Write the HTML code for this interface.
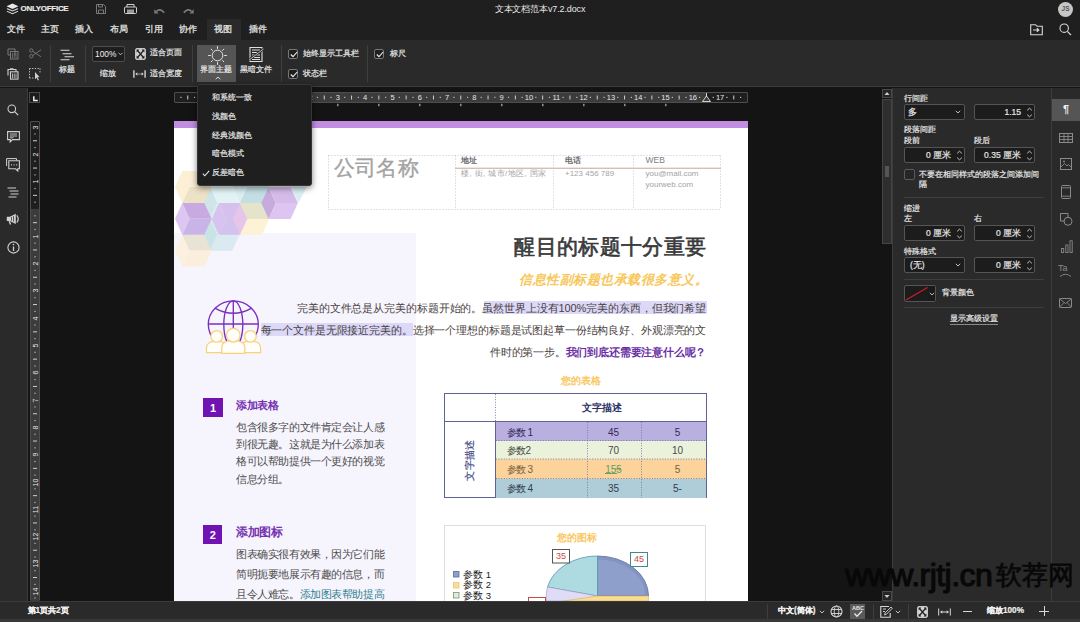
<!DOCTYPE html>
<html><head><meta charset="utf-8">
<style>
*{box-sizing:border-box;margin:0;padding:0}
html,body{width:1080px;height:622px;overflow:hidden;background:#141414;font-family:"Liberation Sans",sans-serif;color:#e8e8e8}
.a{position:absolute}
.t{position:absolute;white-space:nowrap;line-height:1}
svg{position:absolute;overflow:visible}
#top{left:0;top:0;width:1080px;height:40px;background:#1f1f1f}
#tb{left:0;top:40px;width:1080px;height:47px;background:#2a2a2a;border-bottom:1px solid #3b3b3b}
#ls{left:0;top:88px;width:28px;height:514px;background:#2a2a2a;border-right:1px solid #3b3b3b}
#rp{left:892px;top:88px;width:160px;height:514px;background:#2a2a2a;border-left:1px solid #3b3b3b}
#ri{left:1051px;top:88px;width:29px;height:514px;background:#2a2a2a;border-left:1px solid #3b3b3b}
#sb{left:0;top:601px;width:1080px;height:21px;background:#2a2a2a;border-top:1px solid #3b3b3b}
.menu{font-size:9px;color:#e6e6e6;top:25.1px;-webkit-text-stroke-width:0.25px}
.ui{font-size:8px;color:#e6e6e6;-webkit-text-stroke-width:0.2px}
.sep{position:absolute;width:1px;background:#3e3e3e}
.cb{position:absolute;width:10px;height:10px;border:1px solid #777;border-radius:2px;background:#1f1f1f}
.inp{position:absolute;border:1px solid #555;border-radius:2px;background:#1c1c1c}
</style></head><body>
<div id="top" class="a"></div>
<div id="tb" class="a"></div>
<div id="ls" class="a"></div>
<div id="rp" class="a"></div>
<div id="ri" class="a"></div>
<div id="sb" class="a"></div>

<!-- title bar -->
<svg style="left:6px;top:3px" width="13" height="12" viewBox="0 0 13 12">
<path d="M6.5 0.5 L12.5 3.2 L6.5 5.9 L0.5 3.2Z" fill="#e8e8e8"/>
<path d="M1.6 5.3 L6.5 7.5 L11.4 5.3 L12.5 5.9 L6.5 8.6 L0.5 5.9Z" fill="#e8e8e8"/>
<path d="M1.6 8 L6.5 10.2 L11.4 8 L12.5 8.6 L6.5 11.3 L0.5 8.6Z" fill="#e8e8e8"/>
</svg>
<div class="t" style="left:20.5px;top:5.3px;font-size:8px;letter-spacing:-0.29px;font-weight:bold;color:#ececec;-webkit-text-stroke:0.15px #ececec">ONLYOFFICE</div>
<svg style="left:96px;top:4px" width="10" height="10" viewBox="0 0 10 10"><path d="M0.5 0.5H7.5L9.5 2.5V9.5H0.5Z M2.5 0.5V3H6.5V0.5 M2.5 9.5V6H7.5V9.5" fill="none" stroke="#7a7a7a" stroke-width="1"/></svg>
<svg style="left:124px;top:4px" width="13" height="11" viewBox="0 0 13 11"><path d="M3 3V0.5H10V3 M1.5 3H11.5Q12.5 3 12.5 4V8.5Q12.5 9.5 11.5 9.5H1.5Q0.5 9.5 0.5 8.5V4Q0.5 3 1.5 3Z" fill="none" stroke="#d0d0d0" stroke-width="1"/><rect x="3" y="5.5" width="7" height="3.5" fill="#9a9a9a"/></svg>
<svg style="left:154px;top:6.5px" width="11" height="7" viewBox="0 0 11 7"><path d="M2.5 4.3Q6 0.8 10.2 5.8" fill="none" stroke="#7c7c7c" stroke-width="1.7"/><path d="M0.3 2.2V6.6H4.6Z" fill="#7c7c7c"/></svg>
<svg style="left:182.5px;top:6.5px" width="11" height="7" viewBox="0 0 11 7"><path d="M8.5 4.3Q5 0.8 0.8 5.8" fill="none" stroke="#7c7c7c" stroke-width="1.7"/><path d="M10.7 2.2V6.6H6.4Z" fill="#7c7c7c"/></svg>
<div class="t" style="left:0;width:1080px;text-align:center;top:4.8px;font-size:9px;letter-spacing:-0.12px;color:#e8e8e8">文本文档范本v7.2.docx</div>
<div class="a" style="left:1058px;top:2px;width:15px;height:15px;border-radius:50%;background:#c6c6c6"></div>
<div class="t" style="left:1058px;width:15px;text-align:center;top:6px;font-size:6.5px;font-weight:bold;color:#555">JS</div>
<svg style="left:1030px;top:24px" width="14" height="12" viewBox="0 0 14 12"><path d="M0.7 0.7H5.5L7 2.2H12.3V10.8H0.7Z" fill="none" stroke="#d8d8d8" stroke-width="1.1"/><path d="M3 6H8.5 M6.8 4.2L8.8 6L6.8 7.8" fill="none" stroke="#d8d8d8" stroke-width="1.2"/></svg>
<svg style="left:1059px;top:23px" width="13" height="13" viewBox="0 0 13 13"><circle cx="5.2" cy="5.2" r="4.2" fill="none" stroke="#d8d8d8" stroke-width="1.1"/><path d="M8.3 8.3L12 12" stroke="#d8d8d8" stroke-width="1.2"/></svg>
<!-- menu tabs -->
<div class="a" style="left:207px;top:19px;width:34px;height:21px;background:#2a2a2a"></div>
<div class="t menu" style="left:7px">文件</div>
<div class="t menu" style="left:41px">主页</div>
<div class="t menu" style="left:75px">插入</div>
<div class="t menu" style="left:110px">布局</div>
<div class="t menu" style="left:145px">引用</div>
<div class="t menu" style="left:179px">协作</div>
<div class="t menu" style="left:214px">视图</div>
<div class="t menu" style="left:249px">插件</div>

<!-- toolbar -->
<svg style="left:7px;top:48px" width="12" height="12" viewBox="0 0 12 12"><path d="M1 1H8V7.5 M1 1V7H3.5" fill="none" stroke="#7a7a7a" stroke-width="1"/><rect x="3.5" y="3.5" width="7.5" height="7.5" fill="none" stroke="#7a7a7a" stroke-width="1"/><path d="M5.5 5V10 M7.25 5V10 M9 5V10" stroke="#7a7a7a" stroke-width="0.8"/></svg>
<svg style="left:29px;top:48px" width="13" height="11" viewBox="0 0 13 11"><circle cx="2.3" cy="2.5" r="1.7" fill="none" stroke="#7a7a7a" stroke-width="0.9"/><circle cx="2.3" cy="8.2" r="1.7" fill="none" stroke="#7a7a7a" stroke-width="0.9"/><path d="M3.8 3.3L12 8.8 M3.8 7.4L12 1.8" stroke="#7a7a7a" stroke-width="0.9"/></svg>
<svg style="left:7px;top:68px" width="12" height="12" viewBox="0 0 12 12"><path d="M1 7.5V1.5H9V3.5" fill="none" stroke="#d0d0d0" stroke-width="1.1"/><path d="M3 0.8H6.5" stroke="#d0d0d0" stroke-width="1.1"/><rect x="3.5" y="3.8" width="7.5" height="7.3" fill="none" stroke="#d0d0d0" stroke-width="1.1"/><path d="M5.5 5.5V10 M7.25 5.5V10 M9 5.5V10" stroke="#d0d0d0" stroke-width="0.8"/></svg>
<svg style="left:29px;top:68px" width="13" height="13" viewBox="0 0 13 13"><path d="M0.5 0.5H11 M0.5 0.5V10 M0.5 10H6" fill="none" stroke="#d0d0d0" stroke-width="1" stroke-dasharray="1.2 1.5"/><path d="M11 0.5V5" stroke="#d0d0d0" stroke-width="1" stroke-dasharray="1.2 1.5"/><path d="M6 4L10.5 9L8.5 9.2L10 12L9 12.5L7.5 9.8L6 11.2Z" fill="#d0d0d0"/></svg>
<div class="sep" style="left:50px;top:45px;height:37px"></div>
<svg style="left:60px;top:49px" width="16" height="12" viewBox="0 0 16 12"><path d="M0.5 1.3H9.5 M2.5 4.7H11.5 M4.5 7.8H14 M0.5 10.7H9.5" stroke="#d8d8d8" stroke-width="1.1"/></svg>
<div class="t ui" style="left:59px;top:65.5px">标题</div>
<div class="sep" style="left:85px;top:45px;height:37px"></div>
<div class="inp" style="left:92px;top:46px;width:33px;height:16px;background:#1e1e1e;border-color:#4d4d4d"></div>
<div class="t" style="left:95px;top:50px;font-size:8.4px;color:#eee">100%</div>
<svg style="left:118px;top:52px" width="5" height="4" viewBox="0 0 5 4"><path d="M0.5 0.8L2.5 2.8L4.5 0.8" fill="none" stroke="#ccc" stroke-width="0.9"/></svg>
<div class="t ui" style="left:100px;top:70px">缩放</div>
<svg style="left:134.5px;top:48px" width="11" height="12" viewBox="0 0 11 12"><rect x="0.6" y="0.6" width="9.8" height="10.8" rx="1.2" fill="#cfcfcf" stroke="#cfcfcf" stroke-width="1"/><path d="M2.3 2.3L8.7 9.7 M8.7 2.3L2.3 9.7" stroke="#232323" stroke-width="1.3"/><path d="M1.6 1.6H4.4L1.6 4.6Z M9.4 1.6H6.6L9.4 4.6Z M1.6 10.4H4.4L1.6 7.4Z M9.4 10.4H6.6L9.4 7.4Z" fill="#232323"/></svg>
<div class="t ui" style="left:149.5px;top:49px">适合页面</div>
<svg style="left:133px;top:70px" width="13" height="8" viewBox="0 0 13 8"><path d="M0.9 0.2V7.8 M12.1 0.2V7.8" stroke="#c8c8c8" stroke-width="1.5"/><path d="M3 4H10" stroke="#c8c8c8" stroke-width="1" stroke-dasharray="1.5 0.7"/><path d="M2.3 4L4.3 2.3V5.7Z M10.7 4L8.7 2.3V5.7Z" fill="#d0d0d0"/></svg>
<div class="t ui" style="left:149.5px;top:70px">适合宽度</div>
<div class="sep" style="left:192px;top:45px;height:37px"></div>
<div class="a" style="left:197px;top:45px;width:39px;height:37px;background:#555"></div>
<svg style="left:207px;top:45px" width="21" height="21" viewBox="0 0 21 21"><circle cx="10.5" cy="10.5" r="5.3" fill="none" stroke="#e6e6e6" stroke-width="1"/><path d="M10.5 1.2V3.8 M10.5 17.2V19.8 M1.2 10.5H3.8 M17.2 10.5H19.8 M3.9 3.9L5.7 5.7 M15.3 15.3L17.1 17.1 M3.9 17.1L5.7 15.3 M15.3 5.7L17.1 3.9" stroke="#e6e6e6" stroke-width="1"/></svg>
<div class="t ui" style="left:200px;top:65.5px">界面主题</div>
<svg style="left:215px;top:75.5px" width="6" height="4" viewBox="0 0 6 4"><path d="M0.7 3.2L3 1L5.3 3.2" fill="none" stroke="#e6e6e6" stroke-width="0.9"/></svg>
<svg style="left:248px;top:46px" width="17" height="17" viewBox="0 0 17 17"><path d="M2 1.5H14V15.5H2Z" fill="none" stroke="#e0e0e0" stroke-width="1.1"/><path d="M4 4H12 M4 6.5H12 M4 9H12 M4 11.5H12 M4 13.5H12" stroke="#e0e0e0" stroke-width="1"/><path d="M1 14L15.5 3" stroke="#2a2a2a" stroke-width="2.2"/><path d="M1 14L15.5 3" stroke="#e0e0e0" stroke-width="0.8"/></svg>
<div class="t ui" style="left:240px;top:65.5px">黑暗文件</div>
<div class="sep" style="left:281px;top:45px;height:37px"></div>
<div class="cb" style="left:288px;top:49px"></div>
<svg style="left:289.5px;top:51px" width="8" height="7" viewBox="0 0 8 7"><path d="M0.8 3.5L3 5.6L7.2 1" fill="none" stroke="#eee" stroke-width="1.1"/></svg>
<div class="t ui" style="left:303px;top:49.5px">始终显示工具栏</div>
<div class="cb" style="left:288px;top:69px"></div>
<svg style="left:289.5px;top:71px" width="8" height="7" viewBox="0 0 8 7"><path d="M0.8 3.5L3 5.6L7.2 1" fill="none" stroke="#eee" stroke-width="1.1"/></svg>
<div class="t ui" style="left:303px;top:69.5px">状态栏</div>
<div class="sep" style="left:367px;top:45px;height:37px"></div>
<div class="cb" style="left:374px;top:49px"></div>
<svg style="left:375.5px;top:51px" width="8" height="7" viewBox="0 0 8 7"><path d="M0.8 3.5L3 5.6L7.2 1" fill="none" stroke="#eee" stroke-width="1.1"/></svg>
<div class="t ui" style="left:390px;top:49.5px">标尺</div>

<!-- left sidebar -->
<svg style="left:7px;top:104px" width="12" height="12" viewBox="0 0 12 12"><circle cx="4.8" cy="4.8" r="3.8" fill="none" stroke="#d0d0d0" stroke-width="1.1"/><path d="M7.6 7.6L11.2 11.2" stroke="#d0d0d0" stroke-width="1.2"/></svg>
<svg style="left:7px;top:131px" width="13" height="12" viewBox="0 0 13 12"><path d="M0.6 0.6H12.4V8.6H5.5L3.2 11V8.6H0.6Z" fill="none" stroke="#d0d0d0" stroke-width="1.1"/><path d="M2.8 3H10 M2.8 5H10 M2.8 6.8H6.5" stroke="#d0d0d0" stroke-width="0.9"/></svg>
<svg style="left:6px;top:158px" width="14" height="14" viewBox="0 0 14 14"><path d="M0.6 8V0.6H10.5V2.3" fill="none" stroke="#d0d0d0" stroke-width="1"/><path d="M2.8 2.8H13.4V10.8H11.8V13L9.5 10.8H2.8Z" fill="none" stroke="#d0d0d0" stroke-width="1.1"/><path d="M5 6.8H6 M7.6 6.8H8.6 M10.2 6.8H11.2" stroke="#d0d0d0" stroke-width="1.2"/></svg>
<svg style="left:7px;top:187px" width="12" height="11" viewBox="0 0 12 11"><path d="M0.5 1H9 M2.5 4H11.5 M3.5 7H11.5 M1.5 10H9.5" stroke="#d0d0d0" stroke-width="1"/></svg>
<svg style="left:6px;top:213px" width="14" height="12" viewBox="0 0 14 12"><path d="M0.8 3.8H3.8L9.8 0.8V11L3.8 8H0.8Z" fill="#d0d0d0"/><path d="M3.2 8.2L4.6 11.5" stroke="#d0d0d0" stroke-width="1.4"/><path d="M10.8 2.3Q13.6 5.9 10.8 9.5" fill="none" stroke="#d0d0d0" stroke-width="1.2"/><path d="M5.5 4V7.6 M7.5 3V8.6" stroke="#2a2a2a" stroke-width="0.7"/></svg>
<svg style="left:6.5px;top:241px" width="13" height="13" viewBox="0 0 13 13"><circle cx="6.5" cy="6.5" r="5.6" fill="none" stroke="#d0d0d0" stroke-width="1.1"/><path d="M6.5 5.5V10" stroke="#d0d0d0" stroke-width="1.3"/><circle cx="6.5" cy="3.6" r="0.8" fill="#d0d0d0"/></svg>
<!-- rulers -->
<div class="a" style="left:29px;top:92px;width:11px;height:11px;border:1px solid #4a4a4a;background:#1c1c1c"></div>
<svg style="left:32.5px;top:95.5px" width="6" height="6" viewBox="0 0 6 6"><path d="M0.8 0.2V4.6H4.8" fill="none" stroke="#f0f0f0" stroke-width="1.5"/></svg>
<div class="a" style="left:174px;top:92px;width:574px;height:11px;border:1px solid #4e4e4e;border-radius:1px;background:#1e1e1e"></div>
<div class="a" style="left:256px;top:93px;width:451px;height:9px;background:#3c3c3c"></div>
<div class="a" style="left:30px;top:121px;width:10px;height:480px;border:1px solid #4e4e4e;border-radius:1px;background:#1e1e1e"></div>
<div class="a" style="left:31px;top:209px;width:8px;height:392px;background:#3c3c3c"></div>
<svg style="left:0;top:0" width="1080" height="622"><rect x="180.33" y="96.8" width="1.2" height="1.2" fill="#bdbdbd"/><rect x="187.25" y="95.5" width="1" height="4" fill="#cfcfcf"/><rect x="193.97" y="96.8" width="1.2" height="1.2" fill="#bdbdbd"/><rect x="207.62" y="96.8" width="1.2" height="1.2" fill="#bdbdbd"/><rect x="214.55" y="95.5" width="1" height="4" fill="#cfcfcf"/><rect x="221.28" y="96.8" width="1.2" height="1.2" fill="#bdbdbd"/><rect x="234.93" y="96.8" width="1.2" height="1.2" fill="#bdbdbd"/><rect x="241.85" y="95.5" width="1" height="4" fill="#cfcfcf"/><rect x="248.58" y="96.8" width="1.2" height="1.2" fill="#bdbdbd"/><rect x="262.22" y="96.8" width="1.2" height="1.2" fill="#bdbdbd"/><rect x="269.15" y="95.5" width="1" height="4" fill="#cfcfcf"/><rect x="275.88" y="96.8" width="1.2" height="1.2" fill="#bdbdbd"/><rect x="289.52" y="96.8" width="1.2" height="1.2" fill="#bdbdbd"/><rect x="296.45" y="95.5" width="1" height="4" fill="#cfcfcf"/><rect x="303.17" y="96.8" width="1.2" height="1.2" fill="#bdbdbd"/><rect x="316.82" y="96.8" width="1.2" height="1.2" fill="#bdbdbd"/><rect x="323.75" y="95.5" width="1" height="4" fill="#cfcfcf"/><rect x="330.47" y="96.8" width="1.2" height="1.2" fill="#bdbdbd"/><rect x="344.12" y="96.8" width="1.2" height="1.2" fill="#bdbdbd"/><rect x="351.05" y="95.5" width="1" height="4" fill="#cfcfcf"/><rect x="357.77" y="96.8" width="1.2" height="1.2" fill="#bdbdbd"/><rect x="371.42" y="96.8" width="1.2" height="1.2" fill="#bdbdbd"/><rect x="378.35" y="95.5" width="1" height="4" fill="#cfcfcf"/><rect x="385.07" y="96.8" width="1.2" height="1.2" fill="#bdbdbd"/><rect x="398.73" y="96.8" width="1.2" height="1.2" fill="#bdbdbd"/><rect x="405.65" y="95.5" width="1" height="4" fill="#cfcfcf"/><rect x="412.38" y="96.8" width="1.2" height="1.2" fill="#bdbdbd"/><rect x="426.02" y="96.8" width="1.2" height="1.2" fill="#bdbdbd"/><rect x="432.95" y="95.5" width="1" height="4" fill="#cfcfcf"/><rect x="439.67" y="96.8" width="1.2" height="1.2" fill="#bdbdbd"/><rect x="453.32" y="96.8" width="1.2" height="1.2" fill="#bdbdbd"/><rect x="460.25" y="95.5" width="1" height="4" fill="#cfcfcf"/><rect x="466.98" y="96.8" width="1.2" height="1.2" fill="#bdbdbd"/><rect x="480.62" y="96.8" width="1.2" height="1.2" fill="#bdbdbd"/><rect x="487.55" y="95.5" width="1" height="4" fill="#cfcfcf"/><rect x="494.27" y="96.8" width="1.2" height="1.2" fill="#bdbdbd"/><rect x="507.92" y="96.8" width="1.2" height="1.2" fill="#bdbdbd"/><rect x="514.85" y="95.5" width="1" height="4" fill="#cfcfcf"/><rect x="521.57" y="96.8" width="1.2" height="1.2" fill="#bdbdbd"/><rect x="535.23" y="96.8" width="1.2" height="1.2" fill="#bdbdbd"/><rect x="542.15" y="95.5" width="1" height="4" fill="#cfcfcf"/><rect x="548.88" y="96.8" width="1.2" height="1.2" fill="#bdbdbd"/><rect x="562.52" y="96.8" width="1.2" height="1.2" fill="#bdbdbd"/><rect x="569.45" y="95.5" width="1" height="4" fill="#cfcfcf"/><rect x="576.18" y="96.8" width="1.2" height="1.2" fill="#bdbdbd"/><rect x="589.82" y="96.8" width="1.2" height="1.2" fill="#bdbdbd"/><rect x="596.75" y="95.5" width="1" height="4" fill="#cfcfcf"/><rect x="603.48" y="96.8" width="1.2" height="1.2" fill="#bdbdbd"/><rect x="617.12" y="96.8" width="1.2" height="1.2" fill="#bdbdbd"/><rect x="624.05" y="95.5" width="1" height="4" fill="#cfcfcf"/><rect x="630.77" y="96.8" width="1.2" height="1.2" fill="#bdbdbd"/><rect x="644.43" y="96.8" width="1.2" height="1.2" fill="#bdbdbd"/><rect x="651.35" y="95.5" width="1" height="4" fill="#cfcfcf"/><rect x="658.07" y="96.8" width="1.2" height="1.2" fill="#bdbdbd"/><rect x="671.73" y="96.8" width="1.2" height="1.2" fill="#bdbdbd"/><rect x="678.65" y="95.5" width="1" height="4" fill="#cfcfcf"/><rect x="685.38" y="96.8" width="1.2" height="1.2" fill="#bdbdbd"/><rect x="699.02" y="96.8" width="1.2" height="1.2" fill="#bdbdbd"/><rect x="705.95" y="95.5" width="1" height="4" fill="#cfcfcf"/><rect x="712.68" y="96.8" width="1.2" height="1.2" fill="#bdbdbd"/><rect x="726.32" y="96.8" width="1.2" height="1.2" fill="#bdbdbd"/><rect x="733.25" y="95.5" width="1" height="4" fill="#cfcfcf"/><rect x="739.98" y="96.8" width="1.2" height="1.2" fill="#bdbdbd"/></svg>
<div class="t" style="left:195.40px;width:12px;text-align:center;top:93.5px;font-size:7.5px;color:#e6e6e6">2</div>
<div class="t" style="left:222.70px;width:12px;text-align:center;top:93.5px;font-size:7.5px;color:#e6e6e6">1</div>
<div class="t" style="left:277.30px;width:12px;text-align:center;top:93.5px;font-size:7.5px;color:#e6e6e6">1</div>
<div class="t" style="left:304.60px;width:12px;text-align:center;top:93.5px;font-size:7.5px;color:#e6e6e6">2</div>
<div class="t" style="left:331.90px;width:12px;text-align:center;top:93.5px;font-size:7.5px;color:#e6e6e6">3</div>
<div class="t" style="left:359.20px;width:12px;text-align:center;top:93.5px;font-size:7.5px;color:#e6e6e6">4</div>
<div class="t" style="left:386.50px;width:12px;text-align:center;top:93.5px;font-size:7.5px;color:#e6e6e6">5</div>
<div class="t" style="left:413.80px;width:12px;text-align:center;top:93.5px;font-size:7.5px;color:#e6e6e6">6</div>
<div class="t" style="left:441.10px;width:12px;text-align:center;top:93.5px;font-size:7.5px;color:#e6e6e6">7</div>
<div class="t" style="left:468.40px;width:12px;text-align:center;top:93.5px;font-size:7.5px;color:#e6e6e6">8</div>
<div class="t" style="left:495.70px;width:12px;text-align:center;top:93.5px;font-size:7.5px;color:#e6e6e6">9</div>
<div class="t" style="left:523.00px;width:12px;text-align:center;top:93.5px;font-size:7.5px;color:#e6e6e6">10</div>
<div class="t" style="left:550.30px;width:12px;text-align:center;top:93.5px;font-size:7.5px;color:#e6e6e6">11</div>
<div class="t" style="left:577.60px;width:12px;text-align:center;top:93.5px;font-size:7.5px;color:#e6e6e6">12</div>
<div class="t" style="left:604.90px;width:12px;text-align:center;top:93.5px;font-size:7.5px;color:#e6e6e6">13</div>
<div class="t" style="left:632.20px;width:12px;text-align:center;top:93.5px;font-size:7.5px;color:#e6e6e6">14</div>
<div class="t" style="left:659.50px;width:12px;text-align:center;top:93.5px;font-size:7.5px;color:#e6e6e6">15</div>
<div class="t" style="left:686.80px;width:12px;text-align:center;top:93.5px;font-size:7.5px;color:#e6e6e6">16</div>
<div class="t" style="left:714.10px;width:12px;text-align:center;top:93.5px;font-size:7.5px;color:#e6e6e6">17</div>
<svg style="left:0;top:0" width="1080" height="622"><path d="M706.5 93V97 M702.5 101.5L706.5 96L710.5 101.5Z" fill="#3c3c3c" stroke="#e0e0e0" stroke-width="0.9"/><rect x="337.3" y="103.8" width="1.1" height="2.4" fill="#c0c0c0"/><rect x="378.3" y="103.8" width="1.1" height="2.4" fill="#c0c0c0"/><rect x="419.3" y="103.8" width="1.1" height="2.4" fill="#c0c0c0"/><rect x="460.3" y="103.8" width="1.1" height="2.4" fill="#c0c0c0"/><rect x="501.3" y="103.8" width="1.1" height="2.4" fill="#c0c0c0"/><rect x="542.3" y="103.8" width="1.1" height="2.4" fill="#c0c0c0"/><rect x="583.3" y="103.8" width="1.1" height="2.4" fill="#c0c0c0"/><rect x="624.3" y="103.8" width="1.1" height="2.4" fill="#c0c0c0"/><rect x="665.3" y="103.8" width="1.1" height="2.4" fill="#c0c0c0"/></svg>
<svg style="left:0;top:0" width="1080" height="622"><rect x="34.4" y="133.33" width="1.2" height="1.2" fill="#bdbdbd"/><rect x="33" y="140.25" width="4" height="1" fill="#cfcfcf"/><rect x="34.4" y="146.97" width="1.2" height="1.2" fill="#bdbdbd"/><rect x="34.4" y="160.62" width="1.2" height="1.2" fill="#bdbdbd"/><rect x="33" y="167.55" width="4" height="1" fill="#cfcfcf"/><rect x="34.4" y="174.28" width="1.2" height="1.2" fill="#bdbdbd"/><rect x="34.4" y="187.93" width="1.2" height="1.2" fill="#bdbdbd"/><rect x="33" y="194.85" width="4" height="1" fill="#cfcfcf"/><rect x="34.4" y="201.58" width="1.2" height="1.2" fill="#bdbdbd"/><rect x="34.4" y="215.22" width="1.2" height="1.2" fill="#bdbdbd"/><rect x="33" y="222.15" width="4" height="1" fill="#cfcfcf"/><rect x="34.4" y="228.88" width="1.2" height="1.2" fill="#bdbdbd"/><rect x="34.4" y="242.53" width="1.2" height="1.2" fill="#bdbdbd"/><rect x="33" y="249.45" width="4" height="1" fill="#cfcfcf"/><rect x="34.4" y="256.17" width="1.2" height="1.2" fill="#bdbdbd"/><rect x="34.4" y="269.82" width="1.2" height="1.2" fill="#bdbdbd"/><rect x="33" y="276.75" width="4" height="1" fill="#cfcfcf"/><rect x="34.4" y="283.47" width="1.2" height="1.2" fill="#bdbdbd"/><rect x="34.4" y="297.12" width="1.2" height="1.2" fill="#bdbdbd"/><rect x="33" y="304.05" width="4" height="1" fill="#cfcfcf"/><rect x="34.4" y="310.77" width="1.2" height="1.2" fill="#bdbdbd"/><rect x="34.4" y="324.42" width="1.2" height="1.2" fill="#bdbdbd"/><rect x="33" y="331.35" width="4" height="1" fill="#cfcfcf"/><rect x="34.4" y="338.07" width="1.2" height="1.2" fill="#bdbdbd"/><rect x="34.4" y="351.73" width="1.2" height="1.2" fill="#bdbdbd"/><rect x="33" y="358.65" width="4" height="1" fill="#cfcfcf"/><rect x="34.4" y="365.38" width="1.2" height="1.2" fill="#bdbdbd"/><rect x="34.4" y="379.02" width="1.2" height="1.2" fill="#bdbdbd"/><rect x="33" y="385.95" width="4" height="1" fill="#cfcfcf"/><rect x="34.4" y="392.67" width="1.2" height="1.2" fill="#bdbdbd"/><rect x="34.4" y="406.32" width="1.2" height="1.2" fill="#bdbdbd"/><rect x="33" y="413.25" width="4" height="1" fill="#cfcfcf"/><rect x="34.4" y="419.98" width="1.2" height="1.2" fill="#bdbdbd"/><rect x="34.4" y="433.62" width="1.2" height="1.2" fill="#bdbdbd"/><rect x="33" y="440.55" width="4" height="1" fill="#cfcfcf"/><rect x="34.4" y="447.27" width="1.2" height="1.2" fill="#bdbdbd"/><rect x="34.4" y="460.92" width="1.2" height="1.2" fill="#bdbdbd"/><rect x="33" y="467.85" width="4" height="1" fill="#cfcfcf"/><rect x="34.4" y="474.57" width="1.2" height="1.2" fill="#bdbdbd"/><rect x="34.4" y="488.22" width="1.2" height="1.2" fill="#bdbdbd"/><rect x="33" y="495.15" width="4" height="1" fill="#cfcfcf"/><rect x="34.4" y="501.88" width="1.2" height="1.2" fill="#bdbdbd"/><rect x="34.4" y="515.52" width="1.2" height="1.2" fill="#bdbdbd"/><rect x="33" y="522.45" width="4" height="1" fill="#cfcfcf"/><rect x="34.4" y="529.18" width="1.2" height="1.2" fill="#bdbdbd"/><rect x="34.4" y="542.82" width="1.2" height="1.2" fill="#bdbdbd"/><rect x="33" y="549.75" width="4" height="1" fill="#cfcfcf"/><rect x="34.4" y="556.48" width="1.2" height="1.2" fill="#bdbdbd"/><rect x="34.4" y="570.12" width="1.2" height="1.2" fill="#bdbdbd"/><rect x="33" y="577.05" width="4" height="1" fill="#cfcfcf"/><rect x="34.4" y="583.77" width="1.2" height="1.2" fill="#bdbdbd"/><rect x="34.4" y="597.43" width="1.2" height="1.2" fill="#bdbdbd"/></svg>
<div class="t" style="left:29px;width:12px;text-align:center;top:123.60px;font-size:7px;color:#e6e6e6;transform:rotate(-90deg)">3</div>
<div class="t" style="left:29px;width:12px;text-align:center;top:150.90px;font-size:7px;color:#e6e6e6;transform:rotate(-90deg)">2</div>
<div class="t" style="left:29px;width:12px;text-align:center;top:178.20px;font-size:7px;color:#e6e6e6;transform:rotate(-90deg)">1</div>
<div class="t" style="left:29px;width:12px;text-align:center;top:232.80px;font-size:7px;color:#e6e6e6;transform:rotate(-90deg)">1</div>
<div class="t" style="left:29px;width:12px;text-align:center;top:260.10px;font-size:7px;color:#e6e6e6;transform:rotate(-90deg)">2</div>
<div class="t" style="left:29px;width:12px;text-align:center;top:287.40px;font-size:7px;color:#e6e6e6;transform:rotate(-90deg)">3</div>
<div class="t" style="left:29px;width:12px;text-align:center;top:314.70px;font-size:7px;color:#e6e6e6;transform:rotate(-90deg)">4</div>
<div class="t" style="left:29px;width:12px;text-align:center;top:342.00px;font-size:7px;color:#e6e6e6;transform:rotate(-90deg)">5</div>
<div class="t" style="left:29px;width:12px;text-align:center;top:369.30px;font-size:7px;color:#e6e6e6;transform:rotate(-90deg)">6</div>
<div class="t" style="left:29px;width:12px;text-align:center;top:396.60px;font-size:7px;color:#e6e6e6;transform:rotate(-90deg)">7</div>
<div class="t" style="left:29px;width:12px;text-align:center;top:423.90px;font-size:7px;color:#e6e6e6;transform:rotate(-90deg)">8</div>
<div class="t" style="left:29px;width:12px;text-align:center;top:451.20px;font-size:7px;color:#e6e6e6;transform:rotate(-90deg)">9</div>
<div class="t" style="left:29px;width:12px;text-align:center;top:478.50px;font-size:7px;color:#e6e6e6;transform:rotate(-90deg)">10</div>
<div class="t" style="left:29px;width:12px;text-align:center;top:505.80px;font-size:7px;color:#e6e6e6;transform:rotate(-90deg)">11</div>
<div class="t" style="left:29px;width:12px;text-align:center;top:533.10px;font-size:7px;color:#e6e6e6;transform:rotate(-90deg)">12</div>
<div class="t" style="left:29px;width:12px;text-align:center;top:560.40px;font-size:7px;color:#e6e6e6;transform:rotate(-90deg)">13</div>
<div class="t" style="left:29px;width:12px;text-align:center;top:587.70px;font-size:7px;color:#e6e6e6;transform:rotate(-90deg)">14</div>
<!-- scrollbar -->
<div class="a" style="left:882px;top:89px;width:10px;height:9px;border:1px solid #4a4a4a;background:#262626"></div>
<svg style="left:884px;top:91px" width="6" height="5" viewBox="0 0 6 5"><path d="M0.5 4L3 1L5.5 4Z" fill="#cfcfcf"/></svg>
<div class="a" style="left:882px;top:99px;width:10px;height:145px;border:1px solid #454545;background:#2e2e2e"></div>
<div class="a" style="left:885px;top:166px;width:4px;height:11px;background:#555"></div>
<div class="a" style="left:882px;top:591px;width:10px;height:10px;border:1px solid #4a4a4a;background:#262626"></div>
<svg style="left:884px;top:593.5px" width="6" height="5" viewBox="0 0 6 5"><path d="M0.5 1L3 4L5.5 1Z" fill="#cfcfcf"/></svg>

<!-- right panel -->
<div class="t ui" style="left:904px;top:94.5px">行间距</div>
<div class="inp" style="left:904px;top:104px;width:61px;height:16px"></div><div class="t ui" style="left:908px;top:107.7px;font-size:8.5px">多</div><svg style="left:955px;top:110.0px" width="6" height="4" viewBox="0 0 6 4"><path d="M0.8 0.8L3 3L5.2 0.8" fill="none" stroke="#d0d0d0" stroke-width="0.9"/></svg>
<div class="inp" style="left:974px;top:104px;width:61px;height:16px"></div><div class="t ui" style="left:974px;width:47px;text-align:right;top:107.7px;font-size:8.5px">1.15</div><svg style="left:1026px;top:107.0px" width="7" height="11" viewBox="0 0 7 11"><path d="M1.2 3.3L3.5 1.2L5.8 3.3 M1.2 7.7L3.5 9.8L5.8 7.7" fill="none" stroke="#d8d8d8" stroke-width="0.9"/></svg>
<div class="t ui" style="left:904px;top:126px">段落间距</div>
<div class="t ui" style="left:904px;top:137px">段前</div>
<div class="t ui" style="left:974px;top:137px">段后</div>
<div class="inp" style="left:904px;top:147px;width:61px;height:16px"></div><div class="t ui" style="left:904px;width:47px;text-align:right;top:150.7px;font-size:8.5px">0 厘米</div><svg style="left:956px;top:150.0px" width="7" height="11" viewBox="0 0 7 11"><path d="M1.2 3.3L3.5 1.2L5.8 3.3 M1.2 7.7L3.5 9.8L5.8 7.7" fill="none" stroke="#d8d8d8" stroke-width="0.9"/></svg>
<div class="inp" style="left:974px;top:147px;width:61px;height:16px"></div><div class="t ui" style="left:974px;width:47px;text-align:right;top:150.7px;font-size:8.5px">0.35 厘米</div><svg style="left:1026px;top:150.0px" width="7" height="11" viewBox="0 0 7 11"><path d="M1.2 3.3L3.5 1.2L5.8 3.3 M1.2 7.7L3.5 9.8L5.8 7.7" fill="none" stroke="#d8d8d8" stroke-width="0.9"/></svg>
<div class="cb" style="left:904px;top:169px;width:10.5px;height:10.5px;border-color:#5a5a5a;background:#262626"></div>
<div class="t ui" style="left:919px;top:170px;font-size:8px;line-height:9.5px;white-space:normal;width:125px">不要在相同样式的段落之间添加间隔</div>
<div class="a" style="left:904px;top:197px;width:140px;height:1px;background:#3e3e3e"></div>
<div class="t ui" style="left:904px;top:204.5px">缩进</div>
<div class="t ui" style="left:904px;top:215px">左</div>
<div class="t ui" style="left:974px;top:215px">右</div>
<div class="inp" style="left:904px;top:225px;width:61px;height:16px"></div><div class="t ui" style="left:904px;width:47px;text-align:right;top:228.7px;font-size:8.5px">0 厘米</div><svg style="left:956px;top:228.0px" width="7" height="11" viewBox="0 0 7 11"><path d="M1.2 3.3L3.5 1.2L5.8 3.3 M1.2 7.7L3.5 9.8L5.8 7.7" fill="none" stroke="#d8d8d8" stroke-width="0.9"/></svg>
<div class="inp" style="left:974px;top:225px;width:61px;height:16px"></div><div class="t ui" style="left:974px;width:47px;text-align:right;top:228.7px;font-size:8.5px">0 厘米</div><svg style="left:1026px;top:228.0px" width="7" height="11" viewBox="0 0 7 11"><path d="M1.2 3.3L3.5 1.2L5.8 3.3 M1.2 7.7L3.5 9.8L5.8 7.7" fill="none" stroke="#d8d8d8" stroke-width="0.9"/></svg>
<div class="t ui" style="left:904px;top:247.5px">特殊格式</div>
<div class="inp" style="left:904px;top:257px;width:61px;height:16px"></div><div class="t ui" style="left:910px;top:260.7px;font-size:8.5px">(无)</div><svg style="left:955px;top:263.0px" width="6" height="4" viewBox="0 0 6 4"><path d="M0.8 0.8L3 3L5.2 0.8" fill="none" stroke="#d0d0d0" stroke-width="0.9"/></svg>
<div class="inp" style="left:974px;top:257px;width:61px;height:16px"></div><div class="t ui" style="left:974px;width:47px;text-align:right;top:260.7px;font-size:8.5px">0 厘米</div><svg style="left:1026px;top:260.0px" width="7" height="11" viewBox="0 0 7 11"><path d="M1.2 3.3L3.5 1.2L5.8 3.3 M1.2 7.7L3.5 9.8L5.8 7.7" fill="none" stroke="#d8d8d8" stroke-width="0.9"/></svg>
<div class="a" style="left:904px;top:279px;width:140px;height:1px;background:#3e3e3e"></div>
<div class="inp" style="left:904px;top:285px;width:32px;height:17px;border-color:#555"></div>
<div class="a" style="left:928px;top:286px;width:7px;height:15px;background:#1a1a1a"></div>
<svg style="left:905px;top:286px" width="23" height="15" viewBox="0 0 23 15"><path d="M1 14L22.5 1.5" stroke="#d21f2a" stroke-width="1.1"/></svg>
<svg style="left:929px;top:292px" width="6" height="4" viewBox="0 0 6 4"><path d="M0.8 0.8L3 3L5.2 0.8" fill="none" stroke="#d0d0d0" stroke-width="0.9"/></svg>
<div class="t ui" style="left:942px;top:289px">背景颜色</div>
<div class="a" style="left:904px;top:307px;width:140px;height:1px;background:#3e3e3e"></div>
<div class="t ui" style="left:950px;top:315px">显示高级设置</div>
<div class="a" style="left:950px;top:323.5px;width:48px;height:1px;background:#8a8a8a"></div>
<div class="a" style="left:1052px;top:99px;width:28px;height:22px;background:#555"></div>
<div class="t" style="left:1052px;width:28px;text-align:center;top:104px;font-size:11px;font-weight:bold;color:#f0f0f0">¶</div>
<svg style="left:1059px;top:133px" width="14" height="10" viewBox="0 0 14 10"><rect x="0.5" y="0.5" width="13" height="9" fill="none" stroke="#8a8a8a" stroke-width="1"/><path d="M0.5 3.5H13.5 M0.5 6.5H13.5 M5 0.5V9.5 M9 0.5V9.5" stroke="#8a8a8a" stroke-width="0.9"/></svg>
<svg style="left:1060px;top:158px" width="12" height="12" viewBox="0 0 12 12"><rect x="0.5" y="0.5" width="11" height="11" fill="none" stroke="#8a8a8a" stroke-width="1"/><path d="M1 9L4.5 5.5L7 8L8.5 6.5L11 9" fill="none" stroke="#8a8a8a" stroke-width="0.9"/><circle cx="4" cy="3.5" r="0.9" fill="#8a8a8a"/></svg>
<svg style="left:1061px;top:185px" width="10" height="14" viewBox="0 0 10 14"><rect x="0.5" y="0.5" width="9" height="13" rx="1" fill="none" stroke="#8a8a8a" stroke-width="1"/><path d="M0.5 2.8H9.5 M0.5 11.2H9.5" stroke="#8a8a8a" stroke-width="0.9"/></svg>
<svg style="left:1060px;top:213px" width="13" height="13" viewBox="0 0 13 13"><path d="M0.5 0.5H8V5 M0.5 0.5V8H4.5" fill="none" stroke="#8a8a8a" stroke-width="1"/><circle cx="8" cy="8.3" r="4" fill="none" stroke="#8a8a8a" stroke-width="1"/></svg>
<svg style="left:1061px;top:240px" width="12" height="13" viewBox="0 0 12 13"><rect x="0.5" y="8.5" width="2.2" height="4" fill="none" stroke="#8a8a8a" stroke-width="0.9"/><rect x="4.8" y="5" width="2.2" height="7.5" fill="none" stroke="#8a8a8a" stroke-width="0.9"/><rect x="9" y="0.8" width="2.2" height="11.7" fill="none" stroke="#8a8a8a" stroke-width="0.9"/></svg>
<div class="t" style="left:1058px;top:264px;font-size:9px;color:#8a8a8a">Ta</div>
<svg style="left:1059px;top:273px" width="13" height="4" viewBox="0 0 13 4"><path d="M1 3.5Q6.5 -1 12 3.5" fill="none" stroke="#8a8a8a" stroke-width="0.9"/></svg>
<svg style="left:1059px;top:298px" width="13" height="10" viewBox="0 0 13 10"><rect x="0.5" y="0.5" width="12" height="9" rx="0.8" fill="none" stroke="#8a8a8a" stroke-width="1"/><path d="M0.5 0.8L6.5 5.5L12.5 0.8 M0.8 9L5 4.5 M12.2 9L8 4.5" fill="none" stroke="#8a8a8a" stroke-width="0.9"/></svg>
<!-- status bar -->
<div class="a" style="left:0;top:619px;width:1080px;height:3px;background:#383838"></div>
<div class="t ui" style="left:27.5px;top:607px;font-weight:bold;font-size:8.2px;color:#f0f0f0">第1页共2页</div>
<div class="sep" style="left:767px;top:604px;height:15px"></div>
<div class="t ui" style="left:778px;top:607px;font-weight:bold;font-size:8.2px;color:#f0f0f0">中文(简体)</div>
<svg style="left:819px;top:609.5px" width="6" height="4" viewBox="0 0 6 4"><path d="M0.8 0.8L3 3L5.2 0.8" fill="none" stroke="#d0d0d0" stroke-width="0.9"/></svg>
<svg style="left:830px;top:605px" width="13" height="13" viewBox="0 0 13 13"><circle cx="6.5" cy="6.5" r="5.5" fill="none" stroke="#d8d8d8" stroke-width="1.1"/><ellipse cx="6.5" cy="6.5" rx="2.3" ry="5.5" fill="none" stroke="#d8d8d8" stroke-width="0.9"/><path d="M1 4.5H12 M1 8.5H12" stroke="#d8d8d8" stroke-width="0.9"/></svg>
<div class="a" style="left:850px;top:604px;width:15px;height:15px;background:#5a5a5a"></div>
<div class="t" style="left:852px;top:606px;font-size:5.5px;font-weight:bold;color:#e8e8e8">ABC</div>
<svg style="left:853px;top:610px" width="10" height="8" viewBox="0 0 10 8"><path d="M1.5 3.5L4 6.3L9 1" fill="none" stroke="#e8e8e8" stroke-width="1.3"/></svg>
<div class="sep" style="left:873px;top:604px;height:15px"></div>
<svg style="left:880px;top:605px" width="13" height="13" viewBox="0 0 13 13"><path d="M9 1.5H0.8V12.2H10.2V8" fill="none" stroke="#d8d8d8" stroke-width="1.1"/><path d="M3 4H6 M3 6.5H5" stroke="#d8d8d8" stroke-width="0.9"/><path d="M4.5 10L5.2 7.8L11 2L12.3 3.3L6.5 9.2Z" fill="none" stroke="#d8d8d8" stroke-width="0.9"/></svg>
<svg style="left:895px;top:609.5px" width="6" height="4" viewBox="0 0 6 4"><path d="M0.8 0.8L3 3L5.2 0.8" fill="none" stroke="#d0d0d0" stroke-width="0.9"/></svg>
<div class="sep" style="left:908px;top:604px;height:15px"></div>
<svg style="left:917px;top:605.5px" width="11" height="12" viewBox="0 0 11 12"><rect x="0.6" y="0.6" width="9.8" height="10.8" rx="1.2" fill="#d4d4d4" stroke="#d4d4d4" stroke-width="1"/><path d="M2.3 2.3L8.7 9.7 M8.7 2.3L2.3 9.7" stroke="#232323" stroke-width="1.3"/><path d="M1.6 1.6H4.4L1.6 4.6Z M9.4 1.6H6.6L9.4 4.6Z M1.6 10.4H4.4L1.6 7.4Z M9.4 10.4H6.6L9.4 7.4Z" fill="#232323"/></svg>
<svg style="left:938px;top:608px" width="13" height="8" viewBox="0 0 13 8"><path d="M0.7 0.5V7.5 M12.3 0.5V7.5 M2.5 4H10.5" stroke="#d8d8d8" stroke-width="1"/><path d="M2.3 4L4.3 2.3V5.7Z M10.7 4L8.7 2.3V5.7Z" fill="#d8d8d8"/></svg>
<div class="a" style="left:963px;top:611px;width:9px;height:1px;background:#d8d8d8"></div>
<div class="t ui" style="left:987px;top:607px;font-weight:bold;font-size:8.2px;color:#f0f0f0">缩放100%</div>
<div class="a" style="left:1039px;top:611px;width:10px;height:1px;background:#d8d8d8"></div>
<div class="a" style="left:1043.5px;top:606px;width:1px;height:10px;background:#d8d8d8"></div>

<!-- canvas -->
<div id="page" class="a" style="left:174px;top:121px;width:574px;height:480px;background:#fff;overflow:hidden;color:#333">
<div class="a" style="left:0;top:0;width:574px;height:6.5px;background:#c08de0"></div>
<div class="a" style="left:0;top:112px;width:242px;height:400px;background:#f6f4fd"></div>
<svg style="left:0;top:0" width="574" height="480"><polygon points="116.70,66.00 133.00,66.00 124.40,81.80" fill="#d9eef2"/><polygon points="58.50,66.00 65.80,50.10 73.10,66.00 65.80,81.90" fill="#dbeef2"/><polygon points="65.80,50.10 87.80,50.10 95.10,66.00 73.10,66.00" fill="#dff0f4"/><polygon points="73.10,66.00 95.10,66.00 87.80,81.90 65.80,81.90" fill="#c3dfe4"/><polygon points="28.90,81.80 36.20,65.90 43.50,81.80 36.20,97.70" fill="#cfe5e9"/><polygon points="36.20,65.90 58.20,65.90 65.50,81.80 43.50,81.80" fill="#e2f2f5"/><polygon points="43.50,81.80 65.50,81.80 58.20,97.70 36.20,97.70" fill="#d8ecf0"/><polygon points="1.00,66.00 8.30,50.10 15.60,66.00 8.30,81.90" fill="#fcefd6"/><polygon points="8.30,50.10 30.30,50.10 37.60,66.00 15.60,66.00" fill="#fcefd6"/><polygon points="15.60,66.00 37.60,66.00 30.30,81.90 8.30,81.90" fill="#ece2c6"/><polygon points="28.90,113.80 36.20,97.90 43.50,113.80 36.20,129.70" fill="#c9e3e7"/><polygon points="36.20,97.90 58.20,97.90 65.50,113.80 43.50,113.80" fill="#d0e6ea"/><polygon points="43.50,113.80 65.50,113.80 58.20,129.70 36.20,129.70" fill="#dbe9f1"/><polygon points="1.00,129.60 8.30,113.70 15.60,129.60 8.30,145.50" fill="#fcf0e0"/><polygon points="8.30,113.70 30.30,113.70 37.60,129.60 15.60,129.60" fill="#e8e3d4"/><polygon points="15.60,129.60 37.60,129.60 30.30,145.50 8.30,145.50" fill="#fbeedc"/><polygon points="1.00,97.80 8.30,81.90 15.60,97.80 8.30,113.70" fill="#dec6f2"/><polygon points="8.30,81.90 30.30,81.90 37.60,97.80 15.60,97.80" fill="#c9a9e1"/><polygon points="15.60,97.80 37.60,97.80 30.30,113.70 8.30,113.70" fill="#c8b4e7"/><polygon points="37.80,97.90 45.10,82.00 52.40,97.90 45.10,113.80" fill="#d8c2ef"/><polygon points="45.10,82.00 67.10,82.00 74.40,97.90 52.40,97.90" fill="#d6c0ee"/><polygon points="52.40,97.90 74.40,97.90 67.10,113.80 45.10,113.80" fill="#d3c1ee"/><polygon points="58.60,97.90 65.90,82.00 73.20,97.90 65.90,113.80" fill="#e6c6e8"/><polygon points="65.90,82.00 87.90,82.00 95.20,97.90 73.20,97.90" fill="#e5e3ca"/><polygon points="73.20,97.90 95.20,97.90 87.90,113.80 65.90,113.80" fill="#fdf1d6"/><polygon points="87.30,82.10 94.60,66.20 101.90,82.10 94.60,98.00" fill="#c6abdd"/><polygon points="94.60,66.20 116.60,66.20 123.90,82.10 101.90,82.10" fill="#d4bcea"/><polygon points="101.90,82.10 123.90,82.10 116.60,98.00 94.60,98.00" fill="#ddc4f1"/></svg>
<!-- header table -->
<svg style="left:0;top:0" width="574" height="480"><g stroke="#bcc5de" stroke-width="1" stroke-dasharray="1 2" fill="none">
<path d="M154.5 34.5H546.5 M154.5 88.5H546.5 M154.5 34.5V88.5 M546.5 34.5V88.5 M281.5 34.5V88.5 M379.5 34.5V88.5 M459.5 34.5V88.5"/></g>
<rect x="281" y="46.6" width="266" height="1.4" fill="#d6bdb8"/></svg>
<div class="t" style="left:160px;top:36.3px;font-size:21px;letter-spacing:0.17px;color:#a3a3a3;-webkit-text-stroke:0.35px #a3a3a3">公司名称</div>
<div class="t" style="left:287px;top:35.8px;font-size:8px;font-weight:bold;color:#6a6a6a">地址</div>
<div class="t" style="left:391px;top:35.8px;font-size:8px;font-weight:bold;color:#6a6a6a">电话</div>
<div class="t" style="left:471.5px;top:35px;font-size:8.5px;color:#808080">WEB</div>
<div class="t" style="left:287px;top:49.2px;font-size:8px;letter-spacing:0.39px;color:#a3a3a3">楼, 街, 城市/地区, 国家</div>
<div class="t" style="left:391px;top:48.5px;font-size:8px;color:#a3a3a3">+123 456 789</div>
<div class="t" style="left:471.5px;top:46.5px;font-size:8px;color:#a3a3a3;line-height:11.4px">you@mail.com<br>yourweb.com</div>
<!-- title -->
<div class="t" style="left:0;width:532.5px;text-align:right;top:115.2px;font-size:21px;letter-spacing:0.35px;color:#3a3a3a;-webkit-text-stroke:0.65px #3a3a3a">醒目的标题十分重要</div>
<div class="t" style="left:0;width:534px;text-align:right;top:151.9px;font-size:13px;letter-spacing:0.48px;color:#f7c75a;font-style:italic;font-weight:bold">信息性副标题也承载很多意义。</div>
<!-- intro paragraph -->
<div class="a" style="left:309.5px;top:179.5px;width:223px;height:13.5px;background:#dcd8f7"></div>
<div class="a" style="left:86.5px;top:201.5px;width:152.5px;height:13px;background:#dcd8f7"></div>
<div class="t" style="left:0;width:532.2px;text-align:right;top:182px;font-size:11px;letter-spacing:-0.1px;color:#4a4242">完美的文件总是从完美的标题开始的。虽然世界上没有100%完美的东西，但我们希望</div>
<div class="t" style="left:0;width:532.2px;text-align:right;top:203.8px;font-size:11px;letter-spacing:-0.13px;color:#4a4242">每一个文件是无限接近完美的。选择一个理想的标题是试图起草一份结构良好、外观漂亮的文</div>
<div class="t" style="left:0;width:532.2px;text-align:right;top:225.7px;font-size:11px;letter-spacing:-0.19px;color:#4a4242">件时的第一步。<b style="color:#6b2fa6">我们到底还需要注意什么呢？</b></div>
<!-- globe icon -->
<svg style="left:30px;top:176px" width="60" height="60" viewBox="0 0 60 60">
<g fill="none" stroke="#7b2fbe" stroke-width="1.35">
<ellipse cx="29.3" cy="27.4" rx="25" ry="23.5"/>
<ellipse cx="29.3" cy="27.4" rx="9.5" ry="23.5"/>
<path d="M29.3 3.9V50 M4.3 27H54.3 M10.9 11.1Q29.3 21.5 47.7 11.1"/>
</g>
<g fill="#fffefa" stroke="#f7d27c" stroke-width="1.25">
<path d="M2.5 55.5V51Q2.5 44 12.7 44Q22.9 44 22.9 51V55.5Z"/><circle cx="12.7" cy="39.4" r="5.8"/>
<path d="M36.2 55.5V51Q36.2 44 46.4 44Q56.6 44 56.6 51V55.5Z"/><circle cx="46.4" cy="39.4" r="5.8"/>
<path d="M17.8 56.3V50Q17.8 43.5 29.3 43.5Q40.8 43.5 40.8 50V56.3Z"/><circle cx="29.3" cy="38.2" r="6.8"/>
</g>
</svg>
<!-- section 1 -->
<div class="a" style="left:29.3px;top:276.7px;width:19.4px;height:19.1px;background:#7112b3"></div>
<div class="t" style="left:29.3px;width:19.4px;text-align:center;top:281.5px;font-size:11px;font-weight:bold;color:#fff">1</div>
<div class="t" style="left:62px;top:279.4px;font-size:11px;letter-spacing:-0.47px;font-weight:bold;color:#7533b0">添加表格</div>
<div class="t" style="left:62px;top:297.9px;font-size:11px;letter-spacing:-0.41px;color:#4c4c4c;line-height:17.2px">包含很多字的文件肯定会让人感<br>到很无趣。这就是为什么添加表<br>格可以帮助提供一个更好的视觉<br>信息分组。</div>
<!-- section 2 -->
<div class="a" style="left:29.3px;top:404.2px;width:19.2px;height:19.3px;background:#7112b3"></div>
<div class="t" style="left:29.3px;width:19.2px;text-align:center;top:409px;font-size:11px;font-weight:bold;color:#fff">2</div>
<div class="t" style="left:62.3px;top:404.5px;font-size:12px;letter-spacing:-0.53px;font-weight:bold;color:#7533b0">添加图标</div>
<div class="t" style="left:62px;top:423.2px;font-size:11px;letter-spacing:-0.41px;color:#4c4c4c;line-height:20.05px">图表确实很有效果，因为它们能<br>简明扼要地展示有趣的信息，而<br>且令人难忘。<span style="color:#2f7f8f">添加图表帮助提高</span></div>
<!-- table -->
<div class="t" style="left:387.3px;top:254.5px;font-size:10px;font-weight:bold;color:#f9c862">您的表格</div>
<div class="a" style="left:269.5px;top:272px;width:263.5px;height:105px;border:1px solid #5d6394;background:#fff"></div>
<div class="a" style="left:321.5px;top:301px;width:210.5px;height:18.5px;background:#b9b0df"></div>
<div class="a" style="left:321.5px;top:319.5px;width:210.5px;height:18.5px;background:#ebf2dc"></div>
<div class="a" style="left:321.5px;top:338px;width:210.5px;height:19.5px;background:#fbd39b"></div>
<div class="a" style="left:321.5px;top:357.5px;width:210.5px;height:19.5px;background:#afcdd8"></div>
<div class="a" style="left:270px;top:300px;width:263px;height:1px;background:#5d6394"></div>

<div class="a" style="left:321px;top:301px;width:1px;height:76px;background:#5d6394"></div>





<svg style="left:0;top:0" width="574" height="480"><g fill="none" stroke="#6f78a8" stroke-width="0.9" stroke-dasharray="1 1.6"><path d="M321.5 273V301 M413.5 301V377 M467.5 301V377 M322 319.5H533 M322 338H533 M322 357.5H533"/></g></svg><div class="t" style="left:322px;width:211px;text-align:center;top:282px;font-size:10px;font-weight:bold;color:#2b3163">文字描述</div>
<div class="t" style="left:256px;width:80px;text-align:center;top:333.5px;font-size:10px;letter-spacing:0.3px;color:#3f4a86;-webkit-text-stroke:0.2px #3f4a86;transform:rotate(-90deg)">文字描述</div>
<div class="t" style="left:333px;top:307px;font-size:10px;letter-spacing:-0.8px;color:#35285a">参数 1</div>
<div class="t" style="left:333px;top:324.8px;font-size:10px;letter-spacing:-0.8px;color:#4a4a4a">参数2</div>
<div class="t" style="left:333px;top:343.5px;font-size:10px;letter-spacing:-0.8px;color:#7a6040">参数 3</div>
<div class="t" style="left:333px;top:362.6px;font-size:10px;letter-spacing:-0.8px;color:#2d4150">参数 4</div>
<div class="t" style="left:412px;width:55px;text-align:center;top:307px;font-size:10px;color:#35285a">45</div>
<div class="t" style="left:412px;width:55px;text-align:center;top:325px;font-size:10px;color:#4a4a4a">70</div>
<div class="t" style="left:412px;width:55px;text-align:center;top:343.7px;font-size:10px;color:#6aa060">155</div><div class="a" style="left:431.3px;top:351.8px;width:11.5px;height:1px;background:#6aa060"></div>
<svg style="left:440px;top:346px" width="8" height="4" viewBox="0 0 8 4"><path d="M0.5 2H6.5 M4.8 0.5L6.8 2L4.8 3.5" fill="none" stroke="#6aa060" stroke-width="0.8"/></svg>
<div class="t" style="left:412px;width:55px;text-align:center;top:362.6px;font-size:10px;color:#2d4150">35</div>
<div class="t" style="left:471px;width:65px;text-align:center;top:307px;font-size:10px;color:#35285a">5</div>
<div class="t" style="left:471px;width:65px;text-align:center;top:325px;font-size:10px;color:#4a4a4a">10</div>
<div class="t" style="left:471px;width:65px;text-align:center;top:343.7px;font-size:10px;color:#7a6040">5</div>
<div class="t" style="left:471px;width:65px;text-align:center;top:362.6px;font-size:10px;color:#2d4150">5-</div>
<!-- chart -->
<div class="a" style="left:269.5px;top:404px;width:262.5px;height:100px;border:1px solid #dedede"></div>
<div class="t" style="left:383.3px;top:411.8px;font-size:10px;font-weight:bold;color:#f9c862">您的图标</div>
<svg style="left:0;top:0" width="574" height="480">
<path d="M423.5 475 L423.5 435 A51 40 0 0 1 474.5 475Z" fill="#8e9fcb" stroke="#5b6c9c" stroke-width="0.8"/>
<path d="M423.5 437 A49 38 0 0 1 472.5 475" fill="none" stroke="#7d8ebc" stroke-width="3" opacity="0.6"/>
<path d="M423.5 475 L423.5 435 A51 40 0 0 0 373.5 466Z" fill="#aedbe2" stroke="#4f9aa6" stroke-width="0.8"/>
<path d="M423.5 475 L373.5 466 A51 40 0 0 0 372.5 480 L423.5 480Z" fill="#e0dcf6" stroke="#9a94c8" stroke-width="0.6"/>
<path d="M423.5 475 L474.5 475 L474.5 480 L390 480Z" fill="#fbdc93" stroke="#d0b060" stroke-width="0.6"/>
<rect x="378.5" y="428.5" width="17" height="13.5" fill="#fff" stroke="#555" stroke-width="1"/>
<rect x="456.5" y="431.5" width="17" height="14" fill="#fff" stroke="#3d8a8f" stroke-width="1"/>
<rect x="354.5" y="476.5" width="17" height="14" fill="#fff" stroke="#c9494a" stroke-width="1"/>
<rect x="279.5" y="450.5" width="5.5" height="5.5" fill="#8e9fcb" stroke="#5b6c9c" stroke-width="0.8"/>
<rect x="279.5" y="461.5" width="5.5" height="5.5" fill="#fbdc93" stroke="#e8c878" stroke-width="0.8"/>
<rect x="279.5" y="471.5" width="5.5" height="5.5" fill="#e6e3f6" stroke="#7a9a50" stroke-width="0.8"/>
</svg>
<div class="t" style="left:378.5px;width:17px;text-align:center;top:431px;font-size:9px;color:#c9494a">35</div>
<div class="t" style="left:456.5px;width:17px;text-align:center;top:434px;font-size:9px;color:#c9494a">45</div>
<div class="t" style="left:289px;top:448.5px;font-size:9.5px;color:#222;line-height:10.7px">参数 1<br>参数 2<br>参数 3</div>
</div>
<!-- theme dropdown -->
<div class="a" style="left:197px;top:84px;width:115px;height:102px;background:#1f1f1f;border:1px solid #363636;border-radius:3px;box-shadow:0 2px 6px rgba(0,0,0,0.5)"></div>
<div class="t ui" style="left:211.5px;top:93.5px">和系统一致</div>
<div class="t ui" style="left:211.5px;top:112.5px">浅颜色</div>
<div class="t ui" style="left:211.5px;top:131.5px">经典浅颜色</div>
<div class="t ui" style="left:211.5px;top:150px">暗色模式</div>
<div class="t ui" style="left:211.5px;top:169px">反差暗色</div>
<svg style="left:202px;top:169.5px" width="8" height="7" viewBox="0 0 8 7"><path d="M0.8 3.6L2.8 5.8L7.2 0.8" fill="none" stroke="#e6e6e6" stroke-width="1.1"/></svg>
<!-- watermark -->
<div class="t" style="left:845.2px;top:558.6px;font-size:32px;letter-spacing:-0.53px;color:#080808;-webkit-text-stroke:1.2px #080808">www.rjtj.cn</div><div class="t" style="left:995.8px;top:563.4px;font-size:25.8px;color:#080808;-webkit-text-stroke:0.75px #080808">软荐网</div>
</body></html>
